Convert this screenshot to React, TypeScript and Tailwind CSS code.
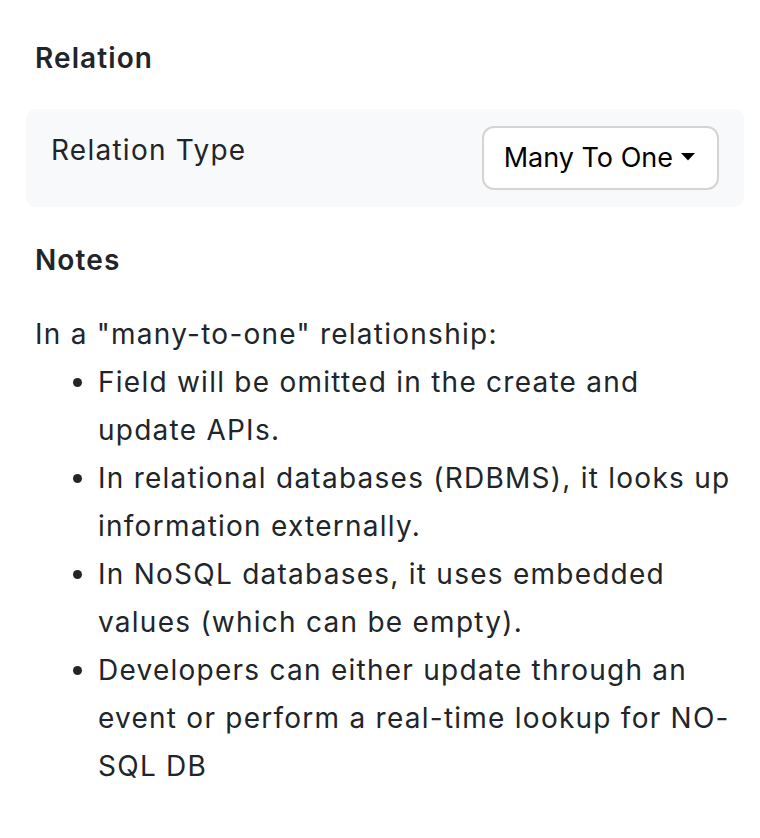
import React from 'react';

const notes = [
  'Field will be omitted in the create and update APIs.',
  'In relational databases (RDBMS), it looks up information externally.',
  'In NoSQL databases, it uses embedded values (which can be empty).',
  'Developers can either update through an event or perform a real-time lookup for NO-SQL DB',
];

function Caret() {
  return (
    <svg width="14" height="8" viewBox="0 0 14 8" className="ml-[8px] mt-[-3px]">
      <path d="M0 0 L14 0 L7 7.5 Z" fill="#000" />
    </svg>
  );
}

export default function App() {
  return (
    <div className="min-h-screen bg-white pl-[26px] pr-[16px] pt-[38px] text-[#212529] font-['Inter',sans-serif] tracking-[1.25px]">
      <h4 className="ml-[9px] text-[28px] leading-[40px] font-semibold tracking-[1.1px]">Relation</h4>

      <div className="mt-[31px] flex items-start justify-between rounded-[10px] bg-[#f8f9fa] px-[25px] py-[17px]">
        <span className="text-[28px] leading-[48px]">Relation Type</span>
        <button className="flex h-[64px] items-center rounded-[12px] border-2 border-[#d4d4d4] bg-white pl-[20px] pr-[22px] text-[27px] tracking-normal text-black">
          Many To One
          <Caret />
        </button>
      </div>

      <h4 className="ml-[9px] mt-[33px] text-[28px] leading-[40px] font-semibold tracking-[1.1px]">Notes</h4>

      <div className="ml-[9px] mt-[30px] w-[700px] text-[28px] leading-[48px]">
        <p>In a "many-to-one" relationship:</p>
        <ul className="list-disc pl-[63px]">
          {notes.map((n) => (
            <li key={n}>{n}</li>
          ))}
        </ul>
      </div>
    </div>
  );
}
